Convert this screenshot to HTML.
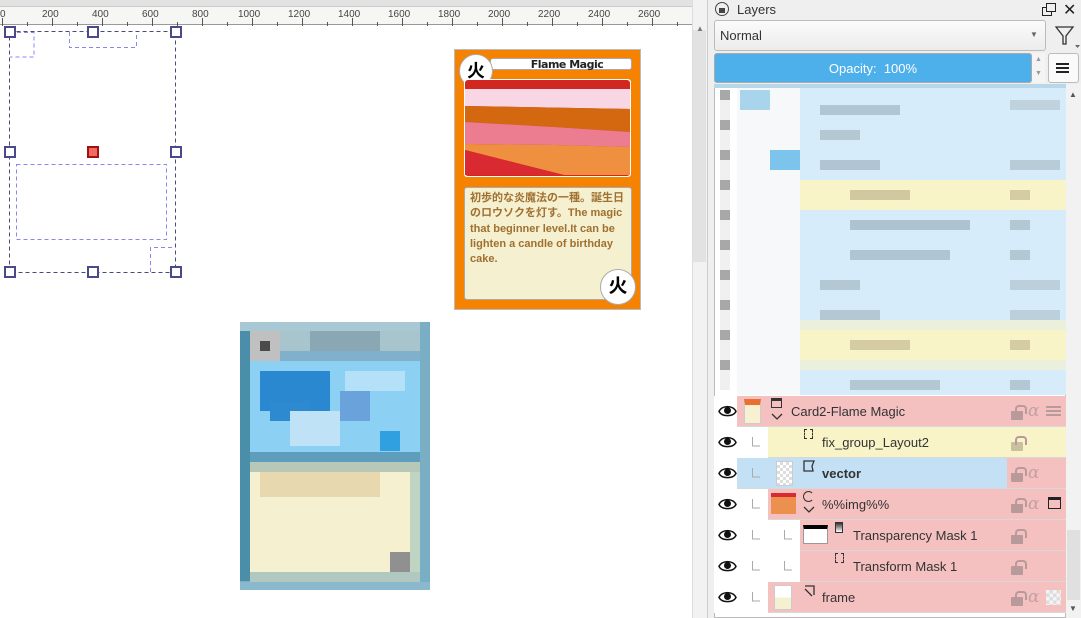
<!DOCTYPE html>
<html><head><meta charset="utf-8"><style>
*{margin:0;padding:0;box-sizing:border-box}
body{width:1081px;height:618px;overflow:hidden;background:#fff;font-family:"Liberation Sans","Noto Sans CJK JP",sans-serif;position:relative}
.a{position:absolute}
.row{position:absolute;left:714px;width:352px;height:31px;border-bottom:1px solid #d8d8d8;font-size:13px;color:#333}
.eye{position:absolute;left:0;top:0;width:23px;height:31px;background:#fff}
.lbl{position:absolute;top:8px}
.lk{position:absolute;width:12px;height:9px;background:#b89a9a;top:15px;border-radius:1px}
.lk::before{content:"";position:absolute;left:4px;top:-6px;width:8px;height:7px;border:2px solid #b89a9a;border-bottom:none;border-radius:4px 4px 0 0}
.al{position:absolute;top:5px;font-style:italic;font-size:17px;color:#c4a0a0;font-family:"DejaVu Serif",serif}
</style></head><body>
<div class="a" style="left:0;top:0;width:692px;height:7px;background:#e2e2e2;border-bottom:1px solid #ccc"></div>
<div class="a" style="left:0;top:7px;width:692px;height:18px;background:#f6f6f4;border-bottom:1px solid #999"></div>
<svg class="a" style="left:0;top:7px" width="692" height="19">
<g stroke="#555" stroke-width="1">
<path d="M2.5 11V19M27.5 15V19M52.5 11V19M77.5 15V19M102.5 11V19M127.5 15V19M152.5 11V19M177.5 15V19M202.5 11V19M227.5 15V19M252.5 11V19M277.5 15V19M302.5 11V19M327.5 15V19M352.5 11V19M377.5 15V19M402.5 11V19M427.5 15V19M452.5 11V19M477.5 15V19M502.5 11V19M527.5 15V19M552.5 11V19M577.5 15V19M602.5 11V19M627.5 15V19M652.5 11V19M677.5 15V19"/>
</g>
<g font-size="10" fill="#444" font-family="Liberation Sans">
<text x="0" y="10">0</text><text x="42" y="10">200</text><text x="92" y="10">400</text><text x="142" y="10">600</text><text x="192" y="10">800</text><text x="238" y="10">1000</text><text x="288" y="10">1200</text><text x="338" y="10">1400</text><text x="388" y="10">1600</text><text x="438" y="10">1800</text><text x="488" y="10">2000</text><text x="538" y="10">2200</text><text x="588" y="10">2400</text><text x="638" y="10">2600</text>
</g></svg>
<div class="a" style="left:692px;top:0;width:15px;height:618px;background:#f2f2f2;border-left:1px solid #ddd"></div>
<div class="a" style="left:693px;top:30px;width:13px;height:232px;background:#e2e2e2"></div>
<div class="a" style="left:696px;top:24px;font-size:8px;color:#777">▲</div>
<svg class="a" style="left:0;top:26px" width="692" height="592">
<g fill="none">
<rect x="9.5" y="5.5" width="166" height="241" stroke="#4a4a80" stroke-dasharray="4 3"/>
<g stroke="#8888f0" stroke-dasharray="4 3">
<path d="M10 6.5H34V31H10"/><path d="M69.5 6V21.5H136.5V6"/>
<rect x="16.5" y="138.5" width="150" height="75"/>
<path d="M150.5 246V221.5H175"/>
</g>
<g stroke="#4a4a8a" stroke-width="2" fill="#fff">
<rect x="5" y="1" width="10" height="10"/><rect x="88" y="1" width="10" height="10"/><rect x="171" y="1" width="10" height="10"/>
<rect x="5" y="121" width="10" height="10"/><rect x="171" y="121" width="10" height="10"/>
<rect x="5" y="241" width="10" height="10"/><rect x="88" y="241" width="10" height="10"/><rect x="171" y="241" width="10" height="10"/>
</g>
<rect x="88" y="121" width="10" height="10" fill="#f06a60" stroke="#a01010" stroke-width="2"/>
</g></svg>
<!-- flame card -->
<div class="a" style="left:454px;top:49px;width:187px;height:261px;background:#f58200;border:1px solid #bbb"></div>
<div class="a" style="left:490px;top:58px;width:142px;height:12px;background:#fff;border:1px solid #aaa;border-radius:3px;font-size:11px;font-weight:bold;text-align:center;line-height:11px;color:#222;padding-left:12px;font-family:'DejaVu Sans',sans-serif;letter-spacing:-0.5px">Flame Magic</div>
<div class="a" style="left:459px;top:54px;width:34px;height:34px;border-radius:50%;background:#fff;border:1px solid #aaa;font-size:18px;font-weight:bold;text-align:center;line-height:32px;color:#000">火</div>
<svg class="a" style="left:464px;top:79px" width="167" height="98">
<rect width="167" height="98" fill="#fff" rx="3"/>
<rect x="1" y="1" width="165" height="96" rx="3" fill="#d02820"/>
<path d="M1 10H166V30L1 27Z" fill="#f8d6e4"/>
<path d="M1 27L166 30V53L90 48L1 43Z" fill="#d46810"/>
<path d="M1 43L90 48L166 53V68L90 66L1 65Z" fill="#ec7c90"/>
<path d="M1 65L90 66L166 68V96H100L1 71Z" fill="#ee9040"/>
<path d="M1 71L100 96H1Z" fill="#d82a30"/>
</svg>
<div class="a" style="left:464px;top:187px;width:168px;height:113px;background:#f4f0d0;border:1px solid #aaa;border-radius:3px;padding:3px 5px;font-size:11px;line-height:15.3px;color:#a07030;font-weight:bold">初歩的な炎魔法の一種。誕生日のロウソクを灯す。The magic that beginner level.It can be lighten a candle of birthday cake.</div>
<div class="a" style="left:600px;top:269px;width:36px;height:36px;border-radius:50%;background:#fff;border:1px solid #aaa;font-size:19px;font-weight:bold;text-align:center;line-height:34px;color:#000">火</div>
<!-- pixel card -->
<div class="a" style="left:240px;top:322px;width:190px;height:268px;background:#7aaec4"></div>
<div class="a" style="left:240px;top:322px;width:180px;height:9px;background:#a8c8d4"></div>
<div class="a" style="left:240px;top:331px;width:10px;height:250px;background:#4a8eaa"></div>
<div class="a" style="left:250px;top:331px;width:170px;height:30px;background:#a8c4cc"></div>
<div class="a" style="left:250px;top:331px;width:30px;height:30px;background:#c0c0c0"></div>
<div class="a" style="left:260px;top:341px;width:10px;height:10px;background:#4a4a4a"></div>
<div class="a" style="left:310px;top:331px;width:70px;height:20px;background:#8aa8b4"></div>
<div class="a" style="left:280px;top:351px;width:140px;height:10px;background:#80b0cc"></div>
<div class="a" style="left:250px;top:361px;width:170px;height:91px;background:#8cd0f4"></div>
<div class="a" style="left:260px;top:371px;width:70px;height:40px;background:#2a88d0"></div>
<div class="a" style="left:270px;top:401px;width:40px;height:20px;background:#2e8ad0"></div>
<div class="a" style="left:345px;top:371px;width:60px;height:20px;background:#b4e0f8"></div>
<div class="a" style="left:340px;top:391px;width:30px;height:30px;background:#6aa2dc"></div>
<div class="a" style="left:290px;top:411px;width:50px;height:35px;background:#c0e2f6"></div>
<div class="a" style="left:380px;top:431px;width:20px;height:20px;background:#30a0e0"></div>
<div class="a" style="left:250px;top:452px;width:170px;height:10px;background:#5e9ebc"></div>
<div class="a" style="left:250px;top:462px;width:170px;height:10px;background:#b8c8b8"></div>
<div class="a" style="left:250px;top:472px;width:160px;height:100px;background:#f4f0d0"></div>
<div class="a" style="left:260px;top:472px;width:120px;height:25px;background:#e8d8b0"></div>
<div class="a" style="left:410px;top:472px;width:10px;height:100px;background:#c0d4c4"></div>
<div class="a" style="left:390px;top:552px;width:20px;height:20px;background:#909090"></div>
<div class="a" style="left:250px;top:572px;width:170px;height:10px;background:#b0c8c0"></div>
<div class="a" style="left:240px;top:582px;width:190px;height:8px;background:#8ab8cc"></div>
<!-- panel -->
<div class="a" style="left:707px;top:0;width:374px;height:618px;background:#efefef;border-left:1px solid #ccc"></div>
<div class="a" style="left:715px;top:2px;width:14px;height:14px;border:1.5px solid #444;border-radius:50%"></div>
<div class="a" style="left:719px;top:8px;width:6px;height:5px;background:#444"></div>
<div class="a" style="left:737px;top:2px;font-size:13px;color:#333">Layers</div>
<div class="a" style="left:1042px;top:7px;width:10px;height:9px;border:1.5px solid #222"></div>
<div class="a" style="left:1046px;top:3px;width:10px;height:9px;border:1.5px solid #222;background:#efefef"></div>
<div class="a" style="left:1063px;top:0;font-size:16px;color:#222">✕</div>
<div class="a" style="left:714px;top:20px;width:332px;height:31px;background:linear-gradient(#fbfbfb,#ececec);border:1px solid #bbb;border-radius:3px;font-size:13px;padding:7px 5px;color:#333">Normal</div>
<div class="a" style="left:1030px;top:30px;font-size:8px;color:#666">▼</div>
<svg class="a" style="left:1055px;top:25px" width="26" height="24"><path d="M1 2H18L11 11V19L8 19V11Z" fill="none" stroke="#333" stroke-width="1.3"/><path d="M20 20H25L22.5 23Z" fill="#666"/></svg>
<div class="a" style="left:714px;top:53px;width:318px;height:30px;background:#4eb0ea;border:1px solid #aaa;border-radius:3px;color:#fff;font-size:13px;text-align:center;line-height:29px">Opacity:&nbsp; 100%</div>
<div class="a" style="left:1032px;top:53px;width:13px;height:30px;background:#f4f4f4;font-size:7px;color:#999;text-align:center;line-height:14px">▲<br>▼</div>
<div class="a" style="left:1048px;top:53px;width:31px;height:30px;background:#fafafa;border:1px solid #bbb;border-radius:3px"></div>
<div class="a" style="left:1056px;top:63px;width:13px;height:2px;background:#222;box-shadow:0 4px #222,0 8px #222"></div>
<!-- list -->
<div class="a" style="left:714px;top:84px;width:352px;height:534px;background:#fff;border:1px solid #bbb"></div>
<div class="a" style="left:800px;top:87px;width:266px;height:308px;background:#d6ecfa"></div>
<div class="a" style="left:737px;top:87px;width:63px;height:308px;background:#f6f8fa"></div>
<div class="a" style="left:714px;top:84px;width:352px;height:4px;background:#b8d8ea"></div>
<div class="a" style="left:800px;top:180px;width:266px;height:30px;background:#f8f4c8"></div>
<div class="a" style="left:800px;top:330px;width:266px;height:30px;background:#f8f4c8"></div>
<div class="a" style="left:800px;top:320px;width:266px;height:10px;background:#eaf0dc"></div>
<div class="a" style="left:800px;top:360px;width:266px;height:10px;background:#eaf0dc"></div>
<div class="a" style="left:740px;top:90px;width:30px;height:20px;background:#a8d4ec"></div>
<div class="a" style="left:770px;top:150px;width:30px;height:20px;background:#7cc4ec"></div>
<div class="a" style="left:820px;top:105px;width:80px;height:10px;background:#b0c6d4"></div>
<div class="a" style="left:820px;top:130px;width:40px;height:10px;background:#b4c8d4"></div>
<div class="a" style="left:820px;top:160px;width:60px;height:10px;background:#b0c4d2"></div>
<div class="a" style="left:850px;top:190px;width:60px;height:10px;background:#d2c8a0"></div>
<div class="a" style="left:850px;top:220px;width:120px;height:10px;background:#aec2d0"></div>
<div class="a" style="left:850px;top:250px;width:100px;height:10px;background:#b0c4d2"></div>
<div class="a" style="left:820px;top:280px;width:40px;height:10px;background:#b4c8d4"></div>
<div class="a" style="left:820px;top:310px;width:60px;height:10px;background:#b4c8d4"></div>
<div class="a" style="left:850px;top:340px;width:60px;height:10px;background:#d6cca4"></div>
<div class="a" style="left:850px;top:380px;width:90px;height:10px;background:#b4c8d4"></div>
<div class="a" style="left:1010px;top:100px;width:50px;height:10px;background:#c0d2de"></div>
<div class="a" style="left:1010px;top:160px;width:50px;height:10px;background:#b8ccd8"></div>
<div class="a" style="left:1010px;top:190px;width:20px;height:10px;background:#d6cca4"></div>
<div class="a" style="left:1010px;top:220px;width:20px;height:10px;background:#b4c8d4"></div>
<div class="a" style="left:1010px;top:250px;width:20px;height:10px;background:#b4c8d4"></div>
<div class="a" style="left:1010px;top:280px;width:50px;height:10px;background:#bcd0dc"></div>
<div class="a" style="left:1010px;top:310px;width:50px;height:10px;background:#bcd0dc"></div>
<div class="a" style="left:1010px;top:340px;width:20px;height:10px;background:#d6cca4"></div>
<div class="a" style="left:1010px;top:380px;width:20px;height:10px;background:#b4c8d4"></div>
<div class="a" style="left:720px;top:90px;width:10px;height:300px;background:repeating-linear-gradient(#a8a8a8 0 10px,#f0f0f0 10px 30px)"></div>
<!-- rows -->
<div class="row" style="top:396px;background:#f4c0c0"><div class="eye"></div>
<div class="a" style="left:30px;top:3px;width:17px;height:25px;background:#f8f0d0;border:1px solid #ccc;border-top:6px solid #e87030"></div>
<div class="a" style="left:57px;top:2px;width:11px;height:10px;border:1.5px solid #333;border-top-width:3px"></div>
<svg class="a" style="left:57px;top:17px" width="12" height="8"><path d="M1 1L6 6L11 1" fill="none" stroke="#333" stroke-width="1.3"/></svg>
<div class="lbl" style="left:77px">Card2-Flame Magic</div><div class="lk" style="left:297px"></div><div class="al" style="left:314px">α</div>
<div class="a" style="left:332px;top:10px;width:15px;height:10px;background:repeating-linear-gradient(#b89a9a 0 2px,transparent 2px 4px)"></div></div>
<div class="row" style="top:427px;background:#f8f4c8"><div class="eye" style="width:54px"></div>
<div class="a" style="left:90px;top:2px;width:9px;height:10px;border:1.3px dashed #333"></div><div class="lbl" style="left:108px">fix_group_Layout2</div><div class="lk" style="left:297px;background:#c8c0a0"></div></div>
<div class="row" style="top:458px;background:#c4e0f4"><div class="eye"></div>
<div class="a" style="left:62px;top:3px;width:17px;height:25px;background:repeating-conic-gradient(#ddd 0 25%,#fff 0 50%) 0 0/6px 6px;border:1px solid #ccc"></div>
<svg class="a" style="left:88px;top:1px" width="14" height="14"><path d="M2 2H12L10 7L11 12H2Z" fill="none" stroke="#333" stroke-width="1.3"/></svg>
<div class="lbl" style="left:108px;font-weight:bold">vector</div>
<div class="a" style="left:293px;top:0;width:59px;height:30px;background:#f4c0c0"></div><div class="lk" style="left:297px"></div><div class="al" style="left:314px">α</div></div>
<div class="row" style="top:489px;background:#f4c0c0"><div class="eye" style="width:54px"></div>
<div class="a" style="left:57px;top:4px;width:25px;height:21px;background:#ec9050;border-top:4px solid #d82a30"></div>
<div class="a" style="left:89px;top:2px;width:11px;height:11px;border:1.3px solid #333;border-radius:50%;border-right-color:transparent"></div>
<svg class="a" style="left:89px;top:17px" width="12" height="8"><path d="M1 1L6 6L11 1" fill="none" stroke="#333" stroke-width="1.3"/></svg>
<div class="lbl" style="left:108px">%%img%%</div><div class="lk" style="left:297px"></div><div class="al" style="left:314px">α</div>
<div class="a" style="left:334px;top:8px;width:13px;height:12px;border:1.5px solid #222;border-top-width:3px"></div></div>
<div class="row" style="top:520px;background:#f4c0c0"><div class="eye" style="width:86px"></div>
<div class="a" style="left:89px;top:5px;width:25px;height:19px;background:#fff;border:1px solid #999;border-top:4px solid #000"></div>
<div class="a" style="left:121px;top:2px;width:8px;height:11px;border:1.3px solid #333;background:linear-gradient(#333,#fff)"></div>
<div class="lbl" style="left:139px">Transparency Mask 1</div><div class="lk" style="left:297px"></div></div>
<div class="row" style="top:551px;background:#f4c0c0"><div class="eye" style="width:86px"></div>
<div class="a" style="left:121px;top:2px;width:9px;height:10px;border:1.3px dashed #333"></div>
<div class="lbl" style="left:139px">Transform Mask 1</div><div class="lk" style="left:297px"></div></div>
<div class="row" style="top:582px;background:#f4c0c0"><div class="eye" style="width:54px"></div>
<div class="a" style="left:60px;top:3px;width:18px;height:25px;background:linear-gradient(#fff 50%,#f4f0d0 50%);border:1px solid #ccc"></div>
<svg class="a" style="left:89px;top:2px" width="14" height="14"><path d="M2 2H11V11M2 5L9 12" fill="none" stroke="#333" stroke-width="1.3"/></svg>
<div class="lbl" style="left:108px">frame</div><div class="lk" style="left:297px"></div><div class="al" style="left:314px">α</div>
<div class="a" style="left:332px;top:8px;width:15px;height:15px;background:repeating-conic-gradient(#ddd 0 25%,#f4f4f4 0 50%) 0 0/7px 7px"></div></div>
<svg class="a" style="left:714px;top:396px" width="100" height="217"><g fill="#111"><g id="e"><path d="M5 15.5C8 9 19 9 22 15.5C19 21 8 21 5 15.5Z" fill="#fff" stroke="#111" stroke-width="1.5"/><circle cx="13.5" cy="14.5" r="3.5"/></g>
<use href="#e" y="31"/><use href="#e" y="62"/><use href="#e" y="93"/><use href="#e" y="124"/><use href="#e" y="155"/><use href="#e" y="186"/></g>
<g stroke="#aaa" fill="none"><path d="M38.5 41V50H46M38.5 72V81H46M38.5 103V112H46M38.5 134V143H46M38.5 165V174H46M38.5 196V205H46M70.5 134V143H78M70.5 165V174H78"/></g></svg>
<div class="a" style="left:1066px;top:84px;width:15px;height:534px;background:#f2f2f2"></div>
<div class="a" style="left:1067px;top:530px;width:13px;height:70px;background:#e0e0e0"></div>
<div class="a" style="left:1069px;top:90px;font-size:8px;color:#555">▲</div>
<div class="a" style="left:1069px;top:604px;font-size:8px;color:#555">▼</div>
</body></html>
